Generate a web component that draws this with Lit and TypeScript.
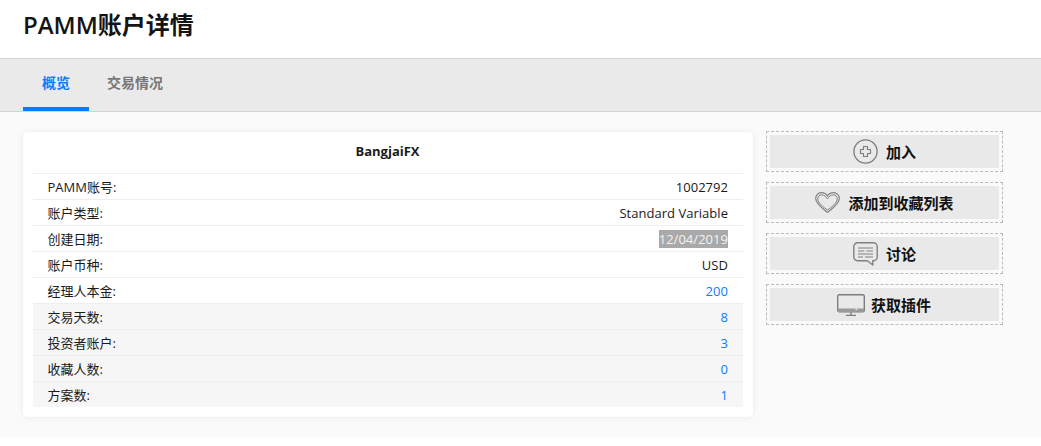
import { LitElement, html, css, svg } from "lit";
import { customElement } from "lit/decorators.js";

const rows: [string, string, string][] = [
  ["PAMM账号:", "1002792", ""],
  ["账户类型:", "Standard Variable", ""],
  ["创建日期:", "12/04/2019", "sel"],
  ["账户币种:", "USD", ""],
  ["经理人本金:", "200", "link"],
  ["交易天数:", "8", "link alt"],
  ["投资者账户:", "3", "link alt"],
  ["收藏人数:", "0", "link alt"],
  ["方案数:", "1", "link alt"],
];

const plus = svg`<svg class="ic" width="25" height="25" viewBox="0 0 25 25" fill="none" stroke="#7d7d7d"><circle cx="12.500" cy="12.500" r="11.600" stroke-width="1.300"/><path stroke-width="1.200" d="M10.500 7.500h4v3h3v4h-3v3h-4v-3h-3v-4h3z" stroke-linejoin="round"/></svg>`;
const heart = svg`<svg class="ic" width="25" height="21" viewBox="0 0 25 21" fill="none" stroke="#808080"><path stroke-width="1.200" d="M12.500 20.300C7.500 16.500.7 12 .7 6.600A5.700 5.700 0 0 1 6.500.7c2.700 0 4.800 1.300 6 3.300 1.200-2 3.300-3.300 6-3.300a5.700 5.700 0 0 1 5.800 5.900c0 5.400-6.800 9.900-11.800 13.700z"/><path stroke-width="1" d="M12.500 18C8.500 15 2.800 11.200 2.800 6.800A3.700 3.700 0 0 1 6.500 2.900c2.800 0 4.800 1.800 6 4 1.200-2.200 3.200-4 6-4a3.700 3.700 0 0 1 3.700 3.900c0 4.400-5.700 8.200-9.700 11.200z"/></svg>`;
const chat = svg`<svg class="ic" width="25" height="24" viewBox="0 0 25 24" fill="none" stroke="#808080"><path stroke-width="1.400" d="M4.500.8h16a3.700 3.700 0 0 1 3.700 3.700v10.500a3.700 3.700 0 0 1-3.700 3.700h-.7v4.300L14.300 18.700H4.500A3.700 3.700 0 0 1 .8 15V4.500A3.700 3.700 0 0 1 4.500.8z" stroke-linejoin="round"/><path stroke-width="1.100" d="M5 6h15M5 9h6.500M13.500 9H20M5 12h15M5 15h5M12 15h8"/></svg>`;
const monitor = svg`<svg class="ic mon" width="28" height="22" viewBox="0 0 28 22" fill="none"><rect x=".7" y=".7" width="26.600" height="17" rx="1.500" stroke="#7d7d7d" stroke-width="1.400"/><path fill="#9a9a9a" d="M1 14.500h26V17a1 1 0 0 1-1 1H2a1 1 0 0 1-1-1z"/><rect x="18.500" y="14.500" width="2" height="1.500" fill="#e4e4e4"/><path stroke="#7d7d7d" stroke-width="1.300" d="M14 18v3M9 21.300h10"/></svg>`;

const buttons = [
  [plus, "加入"],
  [heart, "添加到收藏列表"],
  [chat, "讨论"],
  [monitor, "获取插件"],
];

@customElement("app-root")
export class AppRoot extends LitElement {
  static styles = css`
    :host {
      display: block;
      width: 1041px;
      height: 446px;
      overflow: hidden;
      background: #fff;
      font-family: "Open Sans", "Noto Sans CJK SC", sans-serif;
      color: #1a1a1a;
    }
    .head {
      height: 58px;
      box-sizing: border-box;
      padding: 8px 0 0 23px;
      font-size: 24px;
      line-height: 34px;
      font-weight: 600;
      color: #141414;
      background: #fff;
    }
    .tabs {
      display: flex;
      height: 54px;
      box-sizing: border-box;
      padding-left: 23px;
      background: #eaeaea;
      border-top: 1px solid #d2d2d2;
      border-bottom: 1px solid #d2d2d2;
      font-size: 14px;
      font-weight: 700;
    }
    .tab {
      box-sizing: border-box;
      height: 52px;
      padding: 14px 19px 0;
      line-height: 20px;
      color: #777;
      border-bottom: 4px solid transparent;
    }
    .tab.on {
      color: #0a7cff;
      border-bottom-color: #0a7cff;
      margin-right: -1px;
    }
    .main {
      display: flex;
      align-items: flex-start;
      gap: 13px;
      height: 325px;
      box-sizing: border-box;
      padding: 20px 0 0 23px;
      background: #fafafa;
    }
    .card {
      width: 730px;
      height: 285px;
      box-sizing: border-box;
      padding: 0 10px;
      background: #fff;
      border-radius: 5px;
      box-shadow: 0 0 6px rgba(0, 0, 0, 0.07);
    }
    .title {
      height: 41px;
      line-height: 38px;
      text-align: center;
      font-size: 13px;
      font-weight: 700;
      padding-right: 1px;
    }
    .row {
      display: flex;
      justify-content: space-between;
      align-items: center;
      box-sizing: border-box;
      height: 26px;
      padding: 0 15px 0 14.500px;
      border-top: 1px solid #eeeeee;
      font-size: 13px;
    }
    .row.alt { background: #f6f6f6; }
    .row.link span.v { color: #0a7cff; }
    .v { letter-spacing: 0.03px; }
    .v.sel {
      background: #a9a9a9;
      color: #f4f4f4;
      line-height: 18px;
    }
    .side {
      display: flex;
      flex-direction: column;
      gap: 10px;
      margin-top: -1px;
    }
    .btn {
      width: 237px;
      height: 41px;
      box-sizing: border-box;
      padding: 3px;
      border: 1px dashed #bbbbbb;
    }
    .in {
      display: flex;
      align-items: center;
      justify-content: center;
      gap: 8px;
      height: 33px;
      background: #e9e9e9;
      font-size: 15px;
      font-weight: 700;
      color: #111;
    }
    .ic { flex: none; display: block; }
    .ic.mon { margin: 0 -2px 0 -1px; }
    .foot { height: 9px; background: #fff; }
  `;

  render() {
    return html`
      <div class="head">PAMM账户详情</div>
      <div class="tabs">
        <div class="tab on">概览</div>
        <div class="tab">交易情况</div>
      </div>
      <div class="main">
        <div class="card">
          <div class="title">BangjaiFX</div>
          ${rows.map(
            ([k, v, c]) => html`<div class="row ${c}"><span>${k}</span><span class="v ${c === "sel" ? "sel" : ""}">${v}</span></div>`
          )}
        </div>
        <div class="side">
          ${buttons.map(([i, t]) => html`<div class="btn"><div class="in">${i}<span>${t}</span></div></div>`)}
        </div>
      </div>
      <div class="foot"></div>
    `;
  }
}
